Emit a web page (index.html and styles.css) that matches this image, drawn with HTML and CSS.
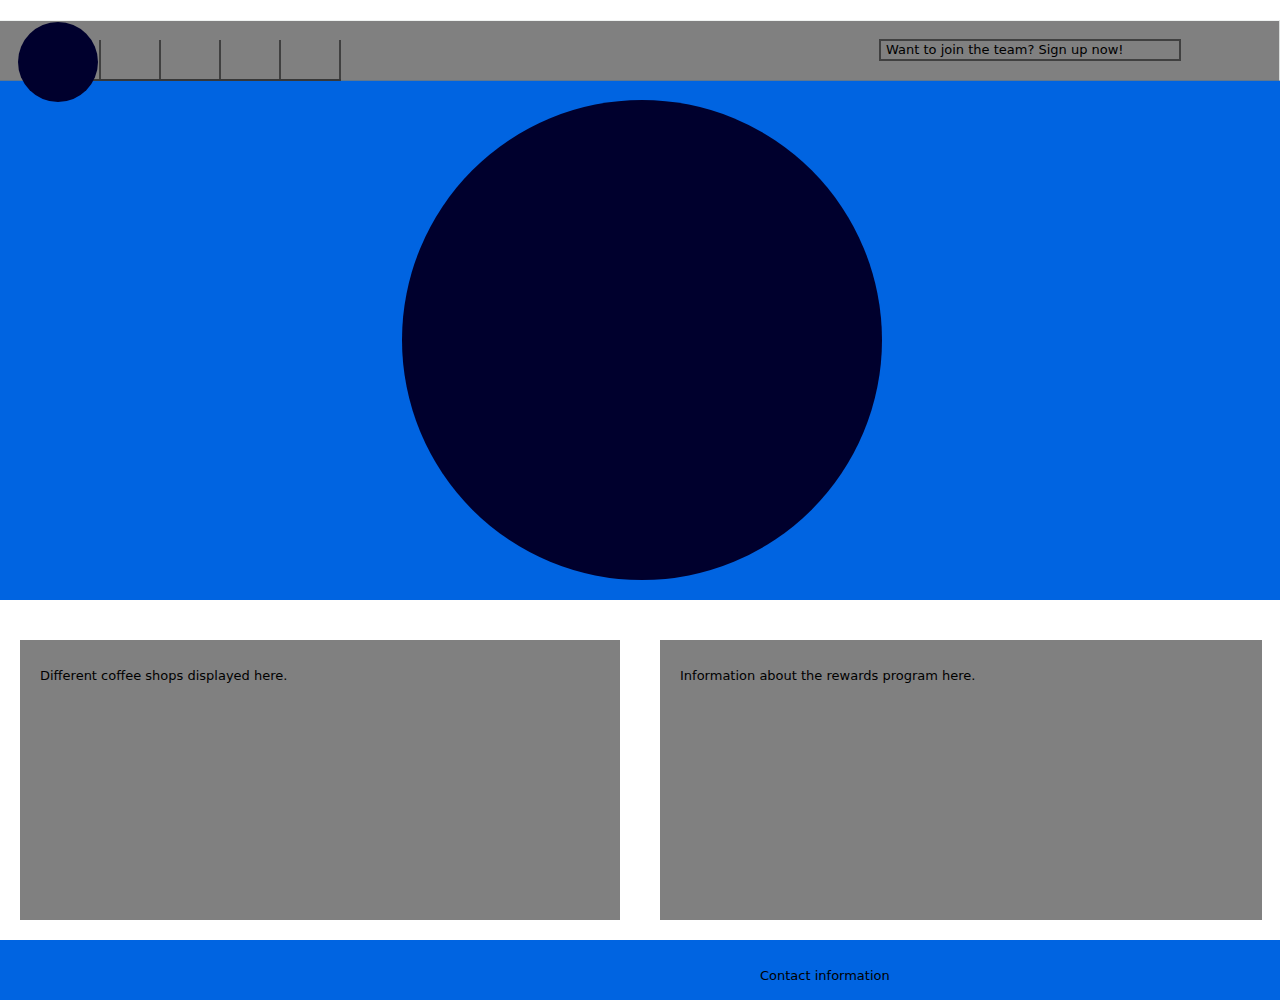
FILE: index.html
```html
<!DOCTYPE html>
<html lang="en">
<head>
<meta charset="utf-8">
<meta name="viewport" content="width=device-width, initial-scale=1">
<title>Coffee shops</title>
<link rel="stylesheet" href="styles.css">
</head>
<body>
<header class="header">
  <a class="logo" href="#" aria-label="Home"></a>
  <nav class="nav" aria-label="Main">
    <a class="tab" href="#shops" aria-label="Shops"></a>
    <a class="tab" href="#rewards" aria-label="Rewards"></a>
    <a class="tab" href="#signup" aria-label="Join"></a>
    <a class="tab" href="#contact" aria-label="Contact"></a>
  </nav>
  <a class="signup" id="signup" href="#signup">Want to join the team? Sign up now!</a>
</header>
<main>
  <section class="hero">
    <div class="emblem"></div>
  </section>
  <div class="cards">
    <section class="card" id="shops"><p>Different coffee shops displayed here.</p></section>
    <section class="card" id="rewards"><p>Information about the rewards program here.</p></section>
  </div>
</main>
<footer class="footer" id="contact"><p>Contact information</p></footer>
</body>
</html>
```
FILE: styles.css
```css
* {
  box-sizing: border-box;
}

body {
  margin: 0;
  padding-top: 20px;
  background: #ffffff;
  color: #000000;
  font: 13px/16px "DejaVu Sans", sans-serif;
}

p {
  margin: 0;
}

.header {
  display: flex;
  align-items: flex-start;
  height: 61px;
  padding-left: 18px;
  border-top: 1px solid #eff2f1;
  border-right: 1px solid #d9dcdb;
  border-bottom: 1px solid #60788f;
  background: #808080;
}

/* The logo hangs below the bar, over the hero. */
.logo {
  position: relative;
  z-index: 1;
  flex: none;
  width: 80px;
  height: 80px;
  margin-top: 1px;
  border-radius: 50%;
  background: #00002d;
}

.nav {
  display: flex;
  height: 41px;
  margin: 19px 0 0 -8px;
  padding-left: 9px;
  border-bottom: 2px solid #383838;
}

.tab {
  width: 60px;
  border-left: 2px solid #404040;
}

.tab:last-child {
  width: 62px;
  border-right: 2px solid #404040;
}

.signup {
  width: 302px;
  height: 22px;
  margin: 18px 98px 0 auto;
  padding: 1px 5px;
  border: 2px solid #404040;
  color: inherit;
  text-decoration: none;
}

.hero {
  display: flex;
  justify-content: center;
  padding: 19px 0 20px 4px;
  background: #0064e1;
}

.emblem {
  width: 480px;
  height: 480px;
  border-radius: 50%;
  background: #00002d;
}

.cards {
  display: grid;
  grid-template-columns: 300fr 301fr;
  gap: 40px;
  padding: 40px 18px 20px 20px;
}

.card {
  min-height: 280px;
  padding: 28px 20px;
  background: #808080;
}

.footer {
  min-height: 60px;
  padding: 28px 20px 16px calc(50% + 120px);
  background: #0064e1;
}
```
